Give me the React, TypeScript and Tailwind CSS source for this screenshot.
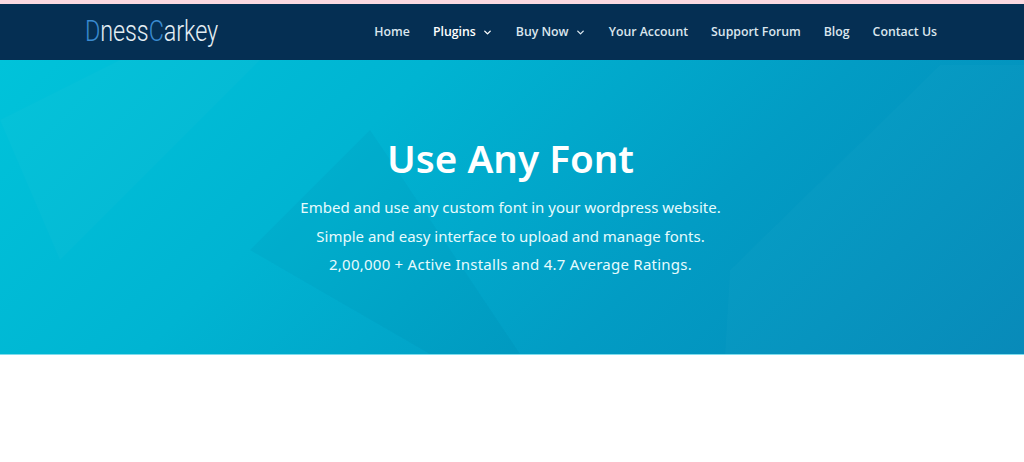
import { ChevronDown } from "lucide-react";

const nav = [
  { label: "Home", x: "text-[#dbe6ee]" },
  { label: "Plugins", x: "text-white", arrow: true },
  { label: "Buy Now", x: "text-[#dbe6ee]", arrow: true },
  { label: "Your Account", x: "text-[#dbe6ee]" },
  { label: "Support Forum", x: "text-[#dbe6ee]" },
  { label: "Blog", x: "text-[#dbe6ee]" },
  { label: "Contact Us", x: "text-[#dbe6ee]" },
];

export default function App() {
  return (
    <div className="w-[1024px] h-[462px] overflow-hidden bg-white font-['Open_Sans',sans-serif]">
      <div className="h-[4px] bg-[#fbd9e0]" />
      <header className="h-[56px] bg-[#052f53] flex items-center justify-between pl-[85px] pr-[87px]">
        <div className="w-[132px] -mt-[3px] font-['Roboto',sans-serif] font-light text-[30px] leading-none tracking-[-0.1px] text-[#e4eef4] origin-left scale-x-[0.78] whitespace-nowrap">
          <span className="text-[#3a8bd0]">D</span>ness<span className="text-[#3a8bd0]">C</span>arkey
        </div>
        <nav className="flex items-center gap-[23px] text-[12.3px] font-semibold">
          {nav.map((n) => (
            <a key={n.label} className={`flex items-center gap-[6px] whitespace-nowrap ${n.x}`}>
              {n.label}
              {n.arrow && <ChevronDown size={11} strokeWidth={3} />}
            </a>
          ))}
        </nav>
      </header>
      <section className="relative h-[295px] overflow-hidden bg-[linear-gradient(135deg,#00c3da_0%,#00b4d2_33%,#029cc4_65%,#0488b8_100%)] border-b border-[#7fdcec] flex flex-col items-center text-center text-white pr-[3px]">
        <svg className="absolute inset-0 w-full h-full" viewBox="0 0 1024 294" preserveAspectRatio="none" aria-hidden="true">
          <polygon points="940,5 730,210 725,294 1024,294 1024,5" fill="#ffffff" opacity="0.018" />
          <polygon points="370,70 250,190 430,294 520,294" fill="#01577f" opacity="0.05" />
          <polygon points="0,60 120,0 260,0 60,200" fill="#ffffff" opacity="0.02" />
        </svg>
        <h1 className="relative mt-[73px] font-['Noto_Sans',sans-serif] font-semibold text-[38.6px] leading-[50px]">Use Any Font</h1>
        <div className="relative mt-[10px] font-['Noto_Sans',sans-serif] text-[15px] leading-[28.5px] text-[#e6fbfd]">
          <p>Embed and use any custom font in your wordpress website.</p>
          <p>Simple and easy interface to upload and manage fonts.</p>
          <p className="tracking-[0.25px]">2,00,000 + Active Installs and 4.7 Average Ratings.</p>
        </div>
      </section>
    </div>
  );
}
